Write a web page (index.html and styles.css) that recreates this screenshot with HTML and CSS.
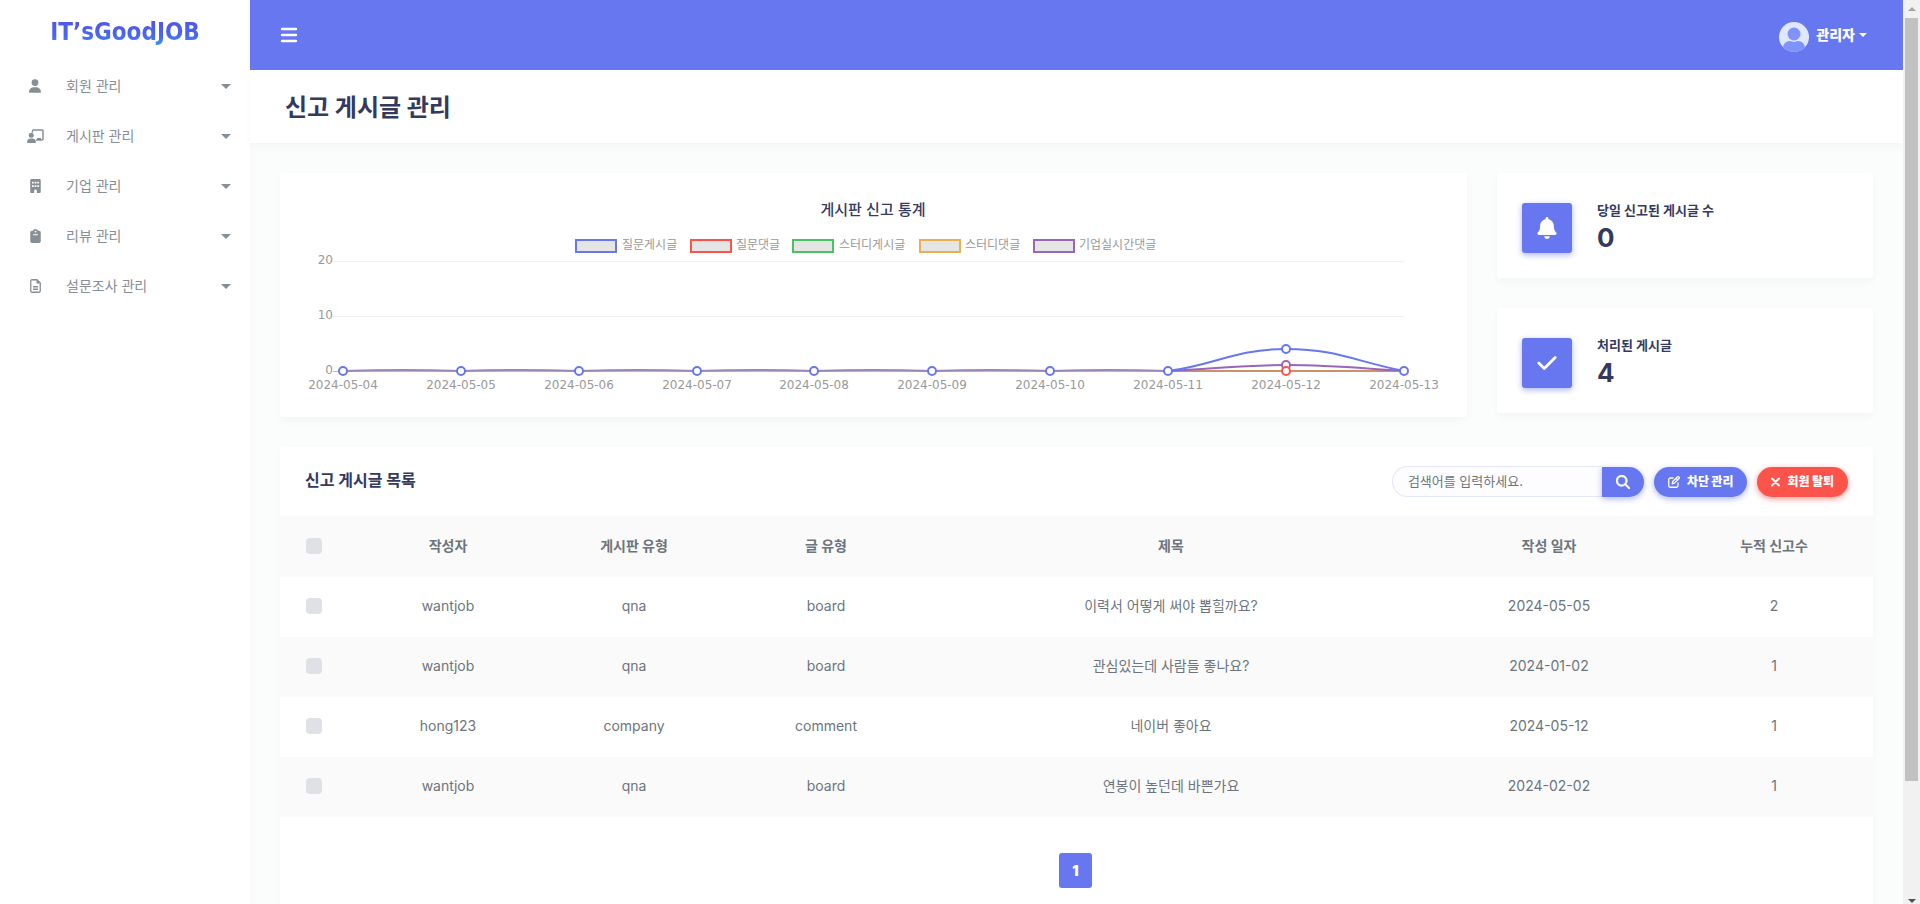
FILE: index.html
```html
<!DOCTYPE html>
<html lang="ko">
<head>
<meta charset="utf-8">
<meta name="viewport" content="width=device-width, initial-scale=1">
<title>신고 게시글 관리</title>
<link rel="stylesheet" href="styles.css">
</head>
<body>
<div class="app">
  <aside class="sidebar">
    <a class="brand" href="#">IT’sGoodJOB</a>
    <nav class="menu">
      <a class="menu-item" href="#">
        <span class="menu-icon"><svg width="12" height="14" viewBox="0 0 448 512"><path d="M224 256A128 128 0 1 0 224 0a128 128 0 1 0 0 256zm-45.700 48C79.800 304 0 383.800 0 482.300C0 498.700 13.300 512 29.700 512H418.300c16.400 0 29.700-13.300 29.700-29.700C448 383.800 368.200 304 269.700 304H178.300z"/></svg></span>
        <span class="menu-label">회원 관리</span><span class="caret"></span>
      </a>
      <a class="menu-item" href="#">
        <span class="menu-icon"><svg width="17" height="14" viewBox="0 0 34 28"><path d="M11 7V4a2 2 0 0 1 2-2h17a2 2 0 0 1 2 2v16a2 2 0 0 1-2 2H18" fill="none" stroke="currentColor" stroke-width="3"/><path d="M20 18h8v4h-8z"/><circle cx="8.500" cy="12.500" r="5"/><path d="M0 26.500C0 22 3 19 7 19h4c4 0 7 3 7 7.500 0 .8-.7 1.500-1.500 1.500h-15C.7 28 0 27.300 0 26.500z"/></svg></span>
        <span class="menu-label">게시판 관리</span><span class="caret"></span>
      </a>
      <a class="menu-item" href="#">
        <span class="menu-icon"><svg width="11" height="14" viewBox="0 0 384 512"><path fill-rule="evenodd" d="M48 0C21.500 0 0 21.500 0 48v416c0 26.500 21.500 48 48 48h96v-80a48 48 0 0 1 96 0v80h96c26.500 0 48-21.500 48-48V48c0-26.500-21.500-48-48-48zM64 96h64v64H64zm96 0h64v64h-64zm96 0h64v64h-64zM64 224h64v64H64zm96 0h64v64h-64zm96 0h64v64h-64z"/></svg></span>
        <span class="menu-label">기업 관리</span><span class="caret"></span>
      </a>
      <a class="menu-item" href="#">
        <span class="menu-icon"><svg width="11" height="14" viewBox="0 0 384 512"><path fill-rule="evenodd" d="M192 0c-41.800 0-77.400 26.700-90.500 64H64C28.700 64 0 92.700 0 128v320c0 35.300 28.700 64 64 64h256c35.300 0 64-28.700 64-64V128c0-35.300-28.700-64-64-64h-37.500C269.400 26.700 233.800 0 192 0zm0 64a32 32 0 1 1 0 64 32 32 0 1 1 0-64zM112 192h160c9 0 16 7 16 16s-7 16-16 16H112c-9 0-16-7-16-16s7-16 16-16z"/></svg></span>
        <span class="menu-label">리뷰 관리</span><span class="caret"></span>
      </a>
      <a class="menu-item" href="#">
        <span class="menu-icon"><svg width="11" height="14" viewBox="0 0 22 28"><path d="M4 1.500h10l6.500 6.500v16a2.500 2.500 0 0 1-2.500 2.500H4A2.500 2.500 0 0 1 1.500 24V4A2.500 2.500 0 0 1 4 1.500zM6 15.500h10M6 20.500h10" fill="none" stroke="currentColor" stroke-width="2.600"/><path d="M13 1v8h8z"/></svg></span>
        <span class="menu-label">설문조사 관리</span><span class="caret"></span>
      </a>
    </nav>
  </aside>

  <div class="page">
    <header class="topbar">
      <button class="toggle" type="button" aria-label="메뉴">
        <svg width="18" height="16" viewBox="0 0 18 16"><path d="M2 2h14M2 8h14M2 14h14" stroke="currentColor" stroke-width="2.400" stroke-linecap="round"/></svg>
      </button>
      <button class="user" type="button">
        <svg class="avatar" width="30" height="30" viewBox="0 0 30 30"><defs><clipPath id="avatar-clip"><circle cx="15" cy="15" r="15"/></clipPath></defs><g clip-path="url(#avatar-clip)"><path fill="#e0e8ff" d="M0 0h30v30H0z"/><circle cx="15" cy="12" r="6.500" fill="#7f93fb"/><path fill="#7f93fb" d="M4 30v-4c0-4 3-7 7-7 2 0 2 1 4 1s2-1 4-1c4 0 7 3 7 7v4z"/></g></svg>
        <span class="user-name">관리자</span><span class="caret"></span>
      </button>
    </header>

    <section class="heading"><h1>신고 게시글 관리</h1></section>

    <main class="content">
      <div class="overview">
        <section class="card">
          <svg class="chart" viewBox="0 0 1187 244" role="img" aria-label="게시판 신고 통계">
            <text class="chart-title" x="593" y="42">게시판 신고 통계</text>
            <g class="legend">
              <rect x="296" y="67" width="40" height="12" stroke="#6777ef"/><text x="342" y="76">질문게시글</text>
              <rect x="411" y="67" width="40" height="12" stroke="#fc544b"/><text x="456" y="76">질문댓글</text>
              <rect x="513" y="67" width="40" height="12" stroke="#47c363"/><text x="559" y="76">스터디게시글</text>
              <rect x="640" y="67" width="40" height="12" stroke="#eead4f"/><text x="685" y="76">스터디댓글</text>
              <rect x="754" y="67" width="40" height="12" stroke="#9966ba"/><text x="799" y="76">기업실시간댓글</text>
            </g>
            <path class="grid" d="M52 88.500H1124M52 143.500H1124"/>
            <path class="axis" d="M53 198.500H1124"/>
            <g class="ticks-y"><text x="53" y="91">20</text><text x="53" y="146">10</text><text x="53" y="201">0</text></g>
            <g class="series">
              <path stroke="#9a86b8" d="M63 198Q122 196 181 198Q240 196 299 198Q358 196 417 198Q476 196 534 198Q593 196 652 198Q711 196 770 198Q829 196 888 198"/>
              <path stroke="#cf8f68" d="M888 198H1124"/>
              <path stroke="#9966ba" d="M888 198C935 196 960 192 1006 192S1077 195 1124 198"/>
              <path stroke="#6777ef" d="M888 198C935 192 955 176 1006 176S1077 189 1124 198"/>
            </g>
            <g class="points" stroke="#6777ef">
              <circle cx="63" cy="198" r="4"/><circle cx="181" cy="198" r="4"/><circle cx="299" cy="198" r="4"/><circle cx="417" cy="198" r="4"/><circle cx="534" cy="198" r="4"/><circle cx="652" cy="198" r="4"/><circle cx="770" cy="198" r="4"/><circle cx="888" cy="198" r="4"/><circle cx="1006" cy="176" r="4"/><circle cx="1124" cy="198" r="4"/>
              <circle cx="1006" cy="192" r="4" stroke="#9966ba"/><circle cx="1006" cy="198" r="4" stroke="#fc544b"/>
            </g>
            <g class="ticks-x">
              <text x="63" y="216">2024-05-04</text><text x="181" y="216">2024-05-05</text><text x="299" y="216">2024-05-06</text><text x="417" y="216">2024-05-07</text><text x="534" y="216">2024-05-08</text><text x="652" y="216">2024-05-09</text><text x="770" y="216">2024-05-10</text><text x="888" y="216">2024-05-11</text><text x="1006" y="216">2024-05-12</text><text x="1124" y="216">2024-05-13</text>
            </g>
          </svg>
        </section>
        <div class="stats">
          <section class="card stat">
            <span class="stat-icon"><svg width="20" height="22" viewBox="0 0 448 512"><path d="M224 0c-17.700 0-32 14.300-32 32V51.200C119 66 64 130.600 64 208v18.800c0 47-17.300 92.400-48.500 127.600l-7.400 8.300c-8.400 9.400-10.400 22.900-5.300 34.400S19.400 416 32 416H416c12.600 0 24-7.400 29.200-18.900s3.100-25-5.300-34.400l-7.400-8.300C401.300 319.200 384 273.900 384 226.800V208c0-77.400-55-142-128-156.800V32c0-17.700-14.300-32-32-32zm45.300 493.300c12-12 18.700-28.300 18.700-45.300H160c0 17 6.700 33.300 18.700 45.300s28.300 18.700 45.300 18.700s33.300-6.700 45.300-18.700z"/></svg></span>
            <div><h2 class="stat-label">당일 신고된 게시글 수</h2><div class="stat-value">0</div></div>
          </section>
          <section class="card stat">
            <span class="stat-icon"><svg width="20" height="22" viewBox="0 0 448 512"><path d="M438.600 105.400c12.500 12.500 12.500 32.800 0 45.300l-256 256c-12.500 12.500-32.800 12.500-45.300 0l-128-128c-12.500-12.500-12.500-32.800 0-45.300s32.800-12.500 45.300 0L160 338.700 393.400 105.400c12.500-12.500 32.800-12.500 45.300 0z"/></svg></span>
            <div><h2 class="stat-label">처리된 게시글</h2><div class="stat-value">4</div></div>
          </section>
        </div>
      </div>

      <section class="card list">
        <div class="list-head">
          <h2 class="list-title">신고 게시글 목록</h2>
          <form class="search">
            <input class="search-input" type="text" placeholder="검색어를 입력하세요." aria-label="검색어">
            <button class="search-button" type="button" aria-label="검색"><svg width="14" height="14" viewBox="0 0 512 512"><path stroke="currentColor" stroke-width="16" d="M416 208c0 45.900-14.900 88.300-40 122.700L502.600 457.400c12.500 12.500 12.500 32.800 0 45.300s-32.800 12.500-45.300 0L330.700 376c-34.400 25.200-76.800 40-122.700 40C93.100 416 0 322.900 0 208S93.100 0 208 0S416 93.100 416 208zM208 352a144 144 0 1 0 0-288 144 144 0 1 0 0 288z"/></svg></button>
          </form>
          <button class="button" type="button"><svg width="12" height="12" viewBox="0 0 24 24"><path d="M10 4H4.500A3 3 0 0 0 1.500 7v12.500a3 3 0 0 0 3 3H17a3 3 0 0 0 3-3V14M8.500 15.500l1-4.500 9-9c1-1 2.500-1 3.300 0 1 1 1 2.300 0 3.300l-9 9zM16 4.500l3.500 3.500" fill="none" stroke="currentColor" stroke-width="2.600" stroke-linejoin="round" stroke-linecap="round"/></svg>차단 관리</button>
          <button class="button danger" type="button"><svg width="9" height="12" viewBox="0 0 9 12"><path d="M1 2.500l7 7M8 2.500l-7 7" stroke="currentColor" stroke-width="2" stroke-linecap="round"/></svg>회원 탈퇴</button>
        </div>
        <table class="table">
          <colgroup><col class="c-check"><col class="c-author"><col class="c-board"><col class="c-kind"><col class="c-title"><col class="c-date"><col class="c-count"></colgroup>
          <thead>
            <tr><th><input type="checkbox" aria-label="전체 선택"></th><th>작성자</th><th>게시판 유형</th><th>글 유형</th><th>제목</th><th>작성 일자</th><th>누적 신고수</th></tr>
          </thead>
          <tbody>
            <tr><td><input type="checkbox" aria-label="선택"></td><td>wantjob</td><td>qna</td><td>board</td><td>이력서 어떻게 써야 뽑힐까요?</td><td>2024-05-05</td><td>2</td></tr>
            <tr><td><input type="checkbox" aria-label="선택"></td><td>wantjob</td><td>qna</td><td>board</td><td>관심있는데 사람들 좋나요?</td><td>2024-01-02</td><td>1</td></tr>
            <tr><td><input type="checkbox" aria-label="선택"></td><td>hong123</td><td>company</td><td>comment</td><td>네이버 좋아요</td><td>2024-05-12</td><td>1</td></tr>
            <tr><td><input type="checkbox" aria-label="선택"></td><td>wantjob</td><td>qna</td><td>board</td><td>연봉이 높던데 바쁜가요</td><td>2024-02-02</td><td>1</td></tr>
          </tbody>
        </table>
        <nav class="pagination" aria-label="페이지"><a class="page-link" href="#">1</a></nav>
      </section>
    </main>
  </div>

  <div class="scrollbar" aria-hidden="true">
    <svg class="scroll-arrow" width="8" height="5" viewBox="0 0 8 5"><path fill="#a3a3a3" d="M4 0l4 4H0z"/></svg>
    <span class="scroll-thumb"></span>
    <svg class="scroll-arrow" width="8" height="5" viewBox="0 0 8 5"><path fill="#505050" d="M0 0h8L4 4z"/></svg>
  </div>
</div>
</body>
</html>
```
FILE: styles.css
```css
* {
  box-sizing: border-box;
}

body {
  margin: 0;
  font-family: Inter, "Noto Sans CJK KR", sans-serif;
  font-size: 14px;
  line-height: 24px;
  color: #6c757d;
  background: #fafdfb;
}

a {
  color: inherit;
  text-decoration: none;
}

h1, h2 {
  margin: 0;
  color: #34395e;
  font-weight: 700;
}

button, input {
  font: inherit;
}

button {
  border: 0;
  padding: 0;
  color: #fff;
  background: none;
  cursor: pointer;
}

svg {
  display: block;
  fill: currentColor;
}

.app {
  display: flex;
  height: 100vh;
  overflow: hidden;
}

.sidebar {
  flex: 0 0 250px;
  background: #fff;
  box-shadow: 0 4px 8px rgba(0, 0, 0, 0.03);
}

.brand {
  display: block;
  width: max-content;
  margin: 14px auto 11px;
  font-family: "DejaVu Sans Condensed", "DejaVu Sans", sans-serif;
  font-size: 24px;
  font-weight: 700;
  line-height: 36px;
  color: transparent;
  background: linear-gradient(#4f56e8 20%, #4a66f0 60%, #3a8df8 85%);
  background-clip: text;
}

.menu-item {
  display: flex;
  align-items: center;
  height: 50px;
  padding: 0 19px 0 20px;
  color: #868e96;
}

.menu-icon {
  display: flex;
  justify-content: center;
  width: 30px;
  margin-right: 16px;
}

.menu-label {
  flex: 1;
}

.caret {
  border: 4px solid transparent;
  border-top-color: currentColor;
  border-bottom: 0;
}

.menu-item .caret {
  border-width: 5px 5px 0;
}

.page {
  flex: 1;
  min-width: 0;
}

.topbar {
  display: flex;
  align-items: center;
  justify-content: space-between;
  height: 70px;
  padding: 0 36px 0 30px;
  color: #fff;
  background: #6777ef;
}

.user {
  display: flex;
  align-items: center;
  gap: 7px;
}

.avatar {
  margin-top: 4px;
}

.user .caret {
  margin-left: -3px;
}

.user-name {
  font-weight: 900;
}

.heading {
  padding: 20px 35px 17px;
  background: #fff;
  box-shadow: 0 4px 8px rgba(0, 0, 0, 0.03);
}

.heading h1 {
  font-size: 24px;
  line-height: 36px;
}

.content {
  display: grid;
  gap: 30px;
  padding: 30px;
}

.card {
  border-radius: 3px;
  background: #fff;
  box-shadow: 0 4px 8px rgba(0, 0, 0, 0.03);
}

.overview {
  display: grid;
  grid-template-columns: minmax(0, 1187fr) minmax(0, 376fr);
  gap: 30px;
  align-items: start;
}

.chart {
  width: 100%;
  font-family: "Noto Sans CJK KR", sans-serif;
  font-size: 12px;
  fill: #999;
}

.chart-title {
  font-size: 15px;
  font-weight: 500;
  text-anchor: middle;
  fill: #34395e;
}

.legend rect {
  fill: #e5e5e5;
  stroke-width: 2;
}

.grid {
  stroke: #f0f0f0;
}

.axis {
  stroke: #bbb;
}

.ticks-x, .ticks-y {
  font-family: "DejaVu Sans", sans-serif;
}

.ticks-x {
  text-anchor: middle;
}

.ticks-y {
  text-anchor: end;
}

.series {
  fill: none;
  stroke-width: 2;
}

.points {
  fill: #fff;
  stroke-width: 2;
}

.stats {
  display: grid;
  gap: 30px;
}

.stat {
  display: flex;
  gap: 25px;
  padding: 25px;
}

.stat-icon {
  display: grid;
  place-items: center;
  width: 50px;
  height: 50px;
  margin-top: 5px;
  border-radius: 3px;
  color: #fff;
  background: #6777ef;
  box-shadow: 0 2px 6px #acb5f6;
}

.stat-label {
  font-size: 13px;
  line-height: 24px;
}

.stat-value {
  color: #34395e;
  font-size: 26px;
  font-weight: 700;
  line-height: 31px;
}

.list-head {
  display: flex;
  align-items: center;
  gap: 10px;
  height: 69px;
  padding: 0 25px;
}

.list-title {
  flex: 1;
  padding-bottom: 3px;
  font-size: 16px;
}

.search {
  display: flex;
  align-items: center;
}

.search-input {
  width: 210px;
  height: 31px;
  padding: 0 15px 2px;
  border: 1px solid #e4e6fc;
  border-right: 0;
  border-radius: 16px 0 0 16px;
  font-size: 13px;
  color: #495057;
  background: #fdfdff;
}

.search-input::placeholder {
  color: #6c757d;
}

.search-button, .button {
  display: flex;
  align-items: center;
  justify-content: center;
  height: 30px;
  border-radius: 15px;
  background: #6777ef;
  box-shadow: 0 2px 6px #acb5f6;
}

.search-button {
  width: 42px;
  border-radius: 0 15px 15px 0;
}

.button {
  gap: 7px;
  padding: 0 14px;
  font-size: 12px;
  font-weight: 900;
}

.danger {
  background: #fc544b;
  box-shadow: 0 2px 6px #fd9b96;
}

.table {
  width: 100%;
  border-collapse: collapse;
  table-layout: fixed;
  text-align: center;
}

.c-check { width: 81px; }
.c-author { width: 174px; }
.c-board { width: 198px; }
.c-kind { width: 186px; }
.c-title { width: 504px; }
.c-date { width: 252px; }
.c-count { width: 198px; }

.table th, .table td {
  height: 60px;
  padding: 0 0 2px;
}

.table th {
  height: 61px;
  font-weight: 700;
  background: #fafafa;
}

.table tr > :first-child {
  padding-left: 26px;
  text-align: left;
}

.table tbody tr:nth-child(even) {
  background: #fafafa;
}

.table input {
  display: block;
  width: 16px;
  height: 16px;
  margin: 0;
  border-radius: 4px;
  appearance: none;
  background: #dee2e6;
}

.pagination {
  display: flex;
  justify-content: center;
  padding: 36px 27px 36px 25px;
}

.page-link {
  padding: 6px 13px 5px;
  border-radius: 3px;
  color: #fff;
  font-weight: 900;
  background: #6777ef;
}

.scrollbar {
  display: flex;
  flex: 0 0 17px;
  flex-direction: column;
  align-items: center;
  gap: 6px;
  padding-top: 7px;
  background: #f1f1f1;
}

.scroll-thumb {
  flex: 0 1 763px;
  width: 13px;
  background: #c1c1c1;
}

.scroll-arrow:last-child {
  margin-top: auto;
}
```
